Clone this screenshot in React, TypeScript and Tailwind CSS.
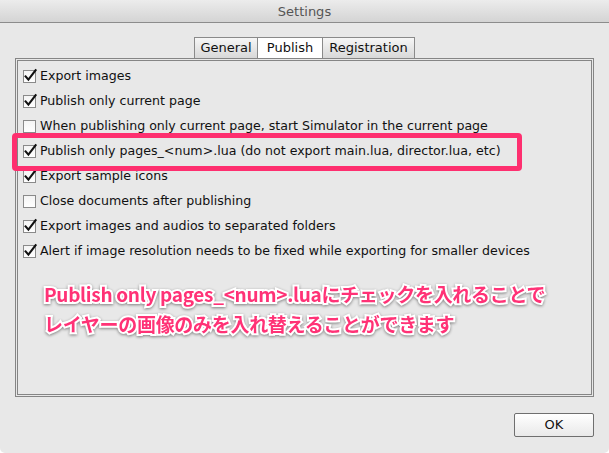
import React from "react";

const rows: { label: string; checked: boolean }[] = [
  { label: "Export images", checked: true },
  { label: "Publish only current page", checked: true },
  { label: "When publishing only current page, start Simulator in the current page", checked: false },
  { label: "Publish only pages_<num>.lua (do not export main.lua, director.lua, etc)", checked: true },
  { label: "Export sample icons", checked: true },
  { label: "Close documents after publishing", checked: false },
  { label: "Export images and audios to separated folders", checked: true },
  { label: "Alert if image resolution needs to be fixed while exporting for smaller devices", checked: true },
];

function Checkbox({ checked }: { checked: boolean }) {
  return (
    <svg width="15" height="15" viewBox="0 0 15 15" className="shrink-0 overflow-visible">
      <defs>
        <linearGradient id="cbg" x1="0" y1="0" x2="0" y2="1">
          <stop offset="0" stopColor="#f4f4f4" />
          <stop offset="1" stopColor="#ffffff" />
        </linearGradient>
      </defs>
      <rect x="0.5" y="1.5" width="12" height="12" fill="url(#cbg)" stroke="#8a8a8a" />
      {checked && (
        <path d="M2.6 7.4 L5.4 10.6 L12.6 1.2" fill="none" stroke="#111" strokeWidth="2.1" strokeLinecap="square" strokeLinejoin="miter" />
      )}
    </svg>
  );
}

export default function App() {
  return (
    <div className="relative w-[609px] h-[453px] bg-[#e8e8e8] overflow-hidden rounded-b-[5px] flex flex-col font-['DejaVu_Sans',sans-serif] text-[12.6px] text-[#111]">
      <div className="h-[23px] shrink-0 border-b border-[#8c8c8c] bg-gradient-to-b from-[#ececec] to-[#d4d4d4] flex items-center justify-center pt-[1px] text-[13px] text-[#555] font-['DejaVu_Sans',sans-serif]">
        Settings
      </div>
      <div className="mt-[14px] flex justify-center h-[21px] text-[13px]">
        <div className="w-[64px] border border-b-0 border-[#8a8a8a] bg-gradient-to-b from-[#f6f6f6] to-[#d8d8d8] flex items-center justify-center">General</div>
        <div className="w-[64px] border-t border-[#8a8a8a] bg-white flex items-center justify-center">Publish</div>
        <div className="w-[93px] border border-b-0 border-[#8a8a8a] bg-gradient-to-b from-[#f6f6f6] to-[#d8d8d8] flex items-center justify-center">Registration</div>
      </div>
      <div className="ml-[15px] w-[579px] h-[339px] border-[3px] border-double border-[#858585] pt-[3px] pl-[5px]">
        {rows.map((r) => (
          <div key={r.label} className="h-[25px] flex items-center">
            <Checkbox checked={r.checked} />
            <span className="ml-[2px] whitespace-nowrap">{r.label}</span>
          </div>
        ))}
        <div className="mt-[15px] pl-[21px] text-[19px] leading-[30px] font-bold text-[#ff3276] font-['Noto_Sans_CJK_JP',sans-serif] [-webkit-text-stroke:4px_white] [paint-order:stroke_fill] [filter:drop-shadow(0_1px_1.5px_rgba(0,0,0,0.45))] whitespace-nowrap tracking-[-0.3px]">
          <div>Publish only pages_&lt;num&gt;.luaにチェックを入れることで</div>
          <div>レイヤーの画像のみを入れ替えることができます</div>
        </div>
      </div>
      <div className="flex justify-end pr-[15px] mt-[16px]">
        <div className="w-[80px] h-[24px] border border-[#6f6f6f] rounded-[2px] bg-gradient-to-b from-white to-[#e9e9e9] flex items-center justify-center text-[13px]">
          OK
        </div>
      </div>
      <div className="absolute left-[12px] top-[133px] w-[510px] h-[38px] border-[5px] border-[#fe2f6f] rounded-[4px]" />
    </div>
  );
}
